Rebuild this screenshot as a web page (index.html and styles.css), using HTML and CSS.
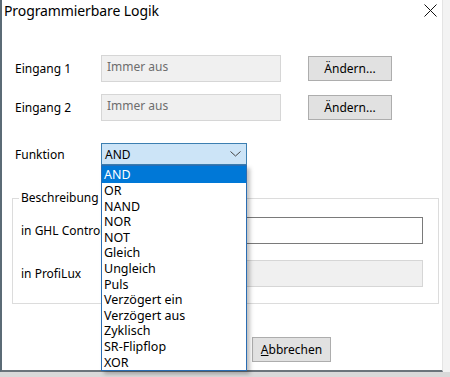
FILE: index.html
```html
<!DOCTYPE html>
<html lang="de">
<head>
  <meta charset="UTF-8" />
  <title>Programmierbare Logik</title>
  <link rel="stylesheet" href="styles.css">
</head>
<body>
  <div class="window">
    <div class="titlebar">
      <span class="title">Programmierbare Logik</span>
      <svg class="close" width="13" height="13" viewBox="0 0 13 13">
        <path d="M0.5 0.5 L12.5 12.5 M12.5 0.5 L0.5 12.5" stroke="#111" stroke-width="1" fill="none" />
      </svg>
    </div>

    <div class="content">
      <div class="row">
        <span class="label">Eingang 1</span>
        <div class="field readonly">Immer aus</div>
        <button class="btn">Ändern...</button>
      </div>
      <div class="row row-second">
        <span class="label">Eingang 2</span>
        <div class="field readonly">Immer aus</div>
        <button class="btn">Ändern...</button>
      </div>
      <div class="row row-func">
        <span class="label">Funktion</span>
        <div class="combo">
          <span>AND</span>
          <svg class="chevron" width="11" height="6" viewBox="0 0 11 6">
            <path d="M0.5 0.5 L5.5 5 L10.5 0.5" stroke="#444" stroke-width="1" fill="none" />
          </svg>
        </div>
      </div>

      <fieldset class="group">
        <legend>Beschreibung</legend>
        <div class="group-row">
          <span class="group-label">in GHL Control</span>
          <div class="field editable"></div>
        </div>
        <div class="group-row group-row-second">
          <span class="group-label">in ProfiLux</span>
          <div class="field readonly"></div>
        </div>
      </fieldset>

      <div class="actions">
        <button class="btn wide">OK</button>
        <button class="btn wide"><u>A</u>bbrechen</button>
      </div>
    </div>

    <ul class="dropdown">
      <li class="selected">AND</li>
      <li>OR</li>
      <li>NAND</li>
      <li>NOR</li>
      <li>NOT</li>
      <li>Gleich</li>
      <li>Ungleich</li>
      <li>Puls</li>
      <li>Verzögert ein</li>
      <li>Verzögert aus</li>
      <li>Zyklisch</li>
      <li>SR-Flipflop</li>
      <li>XOR</li>
    </ul>
  </div>
  <div class="strip"></div>
</body>
</html>
```

FILE: styles.css
```css
body {
  margin: 0;
  padding: 0;
  background: #f3f3f3;
  font-family: 'Noto Sans', 'Open Sans', sans-serif;
  font-size: 12px;
  color: #000;
}
.window {
  position: relative;
  width: 440px;
  height: 370px;
  background: #fff;
  border-left: 2px solid #5b6b76;
  border-right: 1px solid #e4e4e4;
  border-bottom: 2px solid #6b747b;
}
.strip {
  height: 5px;
  background: #d9d9d9;
}
.titlebar {
  height: 32px;
  display: flex;
  align-items: flex-start;
  justify-content: space-between;
}
.title {
  font-size: 14px;
  letter-spacing: -0.1px;
  padding: 1px 0 0 2px;
  line-height: 20px;
}
.close {
  margin: 4px 5px 0 0;
}
.content {
  padding: 23px 0 0 10px;
}
.row {
  display: flex;
  align-items: center;
  padding-left: 3px;
  height: 27px;
}
.row-second {
  margin-top: 12px;
}
.row-func {
  margin-top: 22px;
  height: 22px;
}
.label {
  width: 86px;
}
.field {
  height: 25px;
  box-sizing: border-box;
  border: 1px solid #d6d6d6;
  line-height: 21px;
  padding-left: 5px;
}
.row .field {
  width: 180px;
  height: 27px;
}
.readonly {
  background: #f0f0f0;
  color: #6d6d6d;
}
.editable {
  background: #fff;
  border-color: #7a7a7a;
}
.btn {
  font-family: inherit;
  font-size: 12px;
  color: #000;
  background: #e1e1e1;
  border: 1px solid #adadad;
  height: 25px;
  width: 84px;
  margin-left: 27px;
  padding: 0;
}
.combo {
  width: 146px;
  height: 22px;
  box-sizing: border-box;
  background: #cce4f7;
  border: 1px solid #3c7fb1;
  display: flex;
  align-items: center;
  justify-content: space-between;
  padding: 0 5px 0 3px;
}
.group {
  margin: 25px 0 0 0;
  width: 427px;
  box-sizing: border-box;
  border: 1px solid #dcdcdc;
  padding: 11px 15px 16px 8px;
}
.group legend {
  padding: 0 2px;
  margin-left: -2px;
  line-height: 16px;
}
.group-row {
  display: flex;
  align-items: center;
}
.group-row-second {
  margin-top: 16px;
}
.group-label {
  width: 92px;
}
.group-row .field {
  flex: 1;
  height: 27px;
}
.actions {
  display: flex;
  gap: 8px;
  margin-top: 33px;
  padding-left: 153px;
}
.actions .btn {
  width: 79px;
  margin-left: 0;
}
.dropdown {
  position: absolute;
  left: 99px;
  top: 165px;
  width: 146px;
  box-sizing: border-box;
  margin: 0;
  padding: 0;
  list-style: none;
  background: #fff;
  border: 1px solid #2a6db3;
  box-shadow: 3px 3px 4px rgba(0, 0, 0, 0.25);
}
.dropdown li {
  height: 15.6px;
  line-height: 15.6px;
  padding-left: 2px;
  font-size: 12.5px;
}
.dropdown li.selected {
  background: #0078d7;
  color: #fff;
  height: 17px;
  line-height: 17px;
}
```
